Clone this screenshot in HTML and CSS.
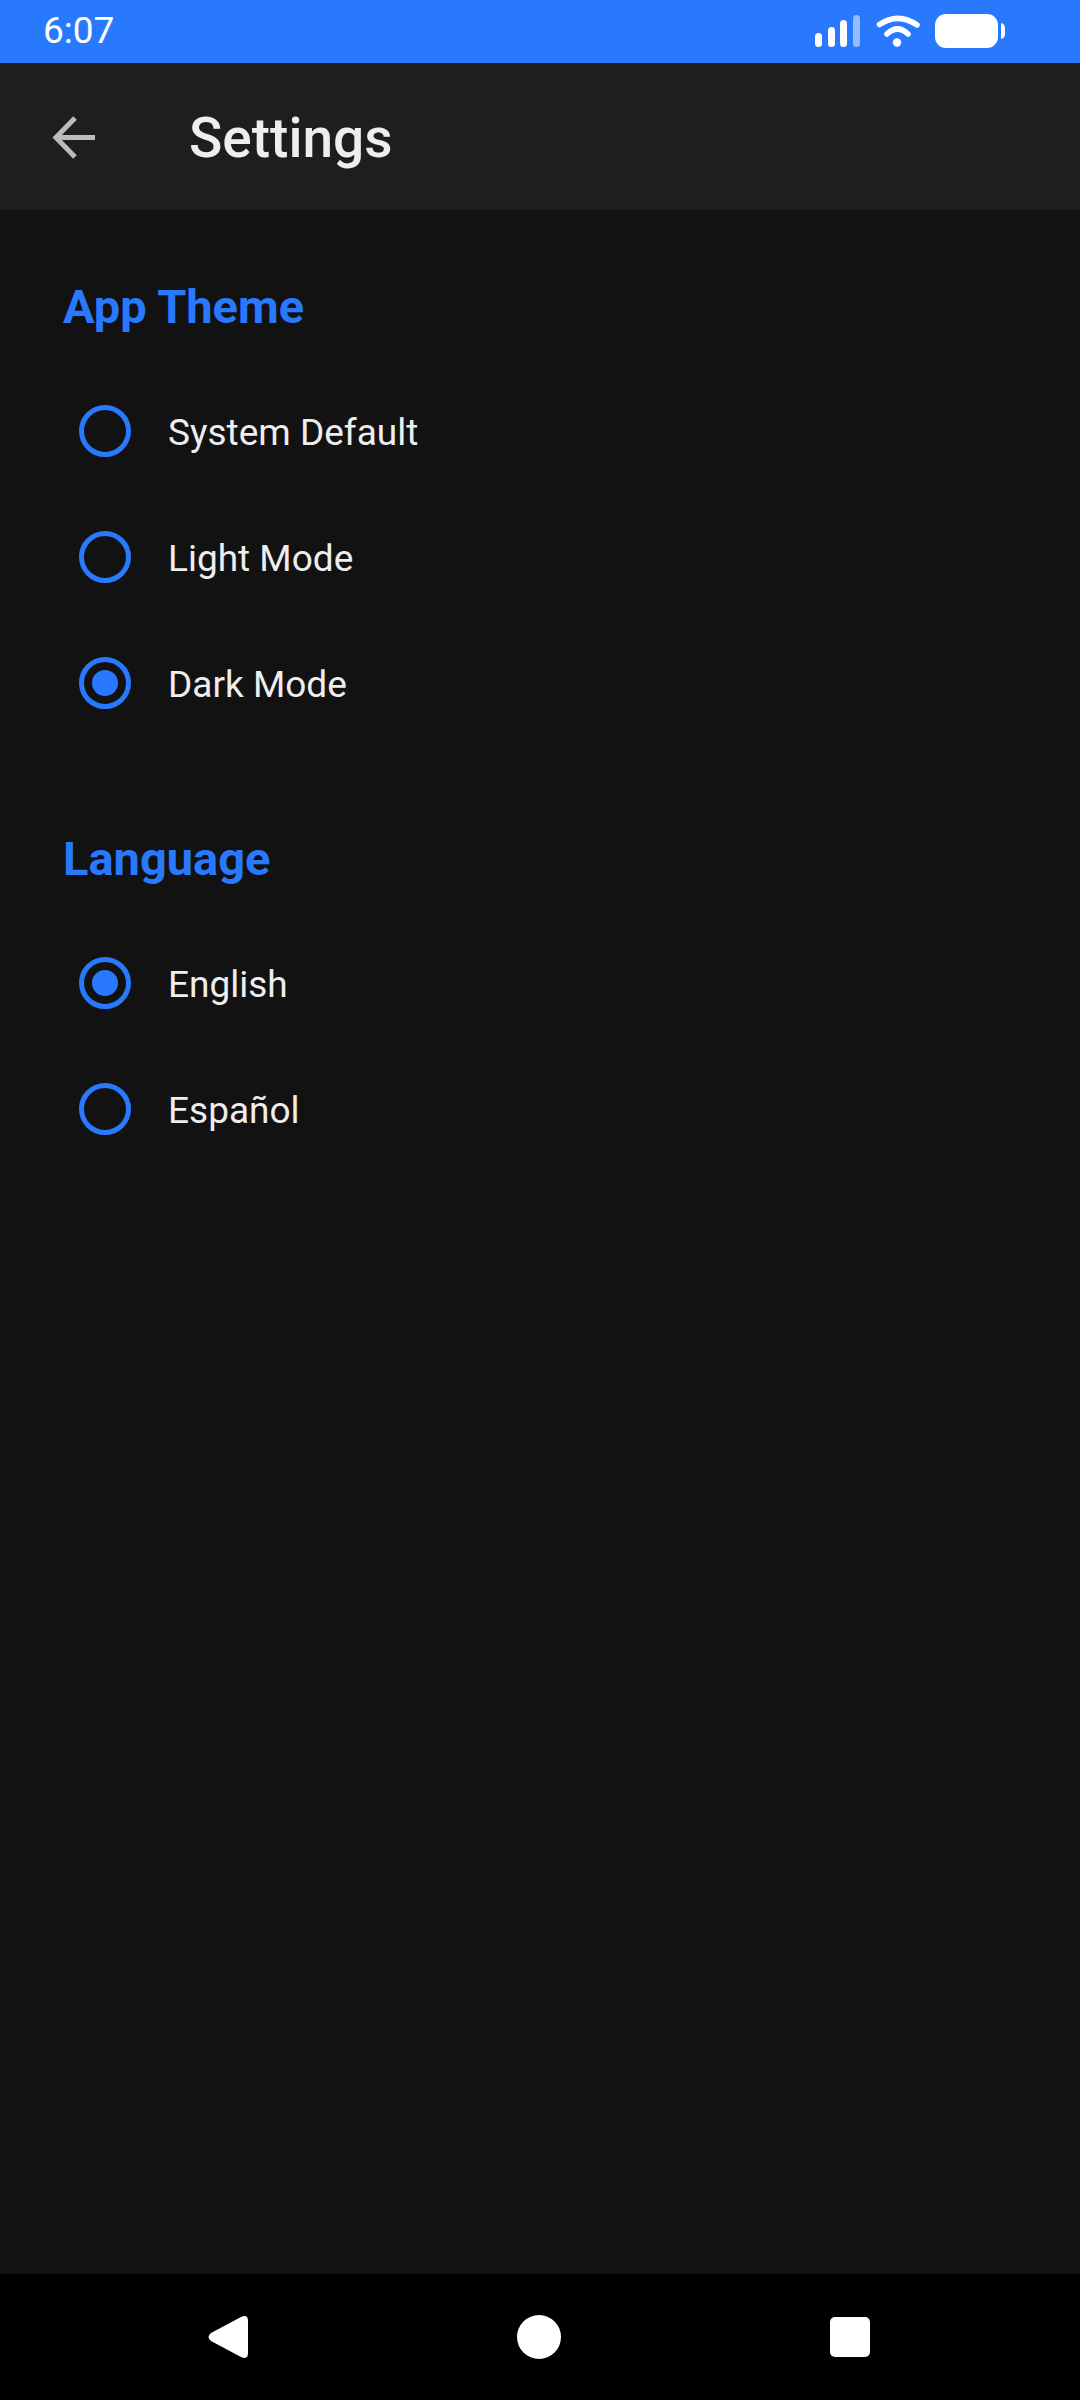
FILE: index.html
```html
<!DOCTYPE html>
<html lang="en">
<head>
    <meta charset="UTF-8">
    <meta name="viewport" content="width=device-width, initial-scale=1.0">
    <title>Settings</title>
    <link rel="stylesheet" href="styles.css">
</head>
<body>
    <div class="status-bar">
        <span class="status-time">6:07</span>
        <svg class="status-icons" width="200" height="63" viewBox="810 0 200 63">
            <rect x="815" y="33" width="7" height="14" rx="3.5" fill="#fff"/>
            <rect x="828" y="27" width="7" height="20" rx="3.5" fill="#fff"/>
            <rect x="840" y="20" width="7" height="27" rx="3.5" fill="#fff"/>
            <rect x="853" y="15" width="7" height="32" rx="3.5" fill="#fff" fill-opacity="0.5"/>
            <path d="M879.5 24.500 Q898 12 917 25" fill="none" stroke="#fff" stroke-width="5.500" stroke-linecap="round"/>
            <path d="M887 34 Q897.500 24 908 34" fill="none" stroke="#fff" stroke-width="5.500" stroke-linecap="round"/>
            <circle cx="897" cy="42.500" r="4.200" fill="#fff"/>
            <rect x="935" y="14" width="63" height="34" rx="11" fill="#fff"/>
            <path d="M1001 23 Q1005 24 1005 28 V34 Q1005 38 1001 39 Z" fill="#fff"/>
        </svg>
    </div>

    <header class="toolbar">
        <svg class="back-icon" width="46" height="46" viewBox="0 0 46 46">
            <path d="M45 23.500 H6 M25 4 L6 23.500 L25 43" fill="none" stroke="#bbb" stroke-width="5"/>
        </svg>
        <h1 class="toolbar-title">Settings</h1>
    </header>

    <main class="content">
        <section class="group">
            <h2 class="group-title">App Theme</h2>
            <div class="option"><span class="radio"></span><span class="option-label">System Default</span></div>
            <div class="option"><span class="radio"></span><span class="option-label">Light Mode</span></div>
            <div class="option"><span class="radio checked"></span><span class="option-label">Dark Mode</span></div>
        </section>
        <section class="group">
            <h2 class="group-title">Language</h2>
            <div class="option"><span class="radio checked"></span><span class="option-label">English</span></div>
            <div class="option"><span class="radio"></span><span class="option-label">Español</span></div>
        </section>
    </main>

    <nav class="nav-bar">
        <svg width="40" height="44" viewBox="0 0 40 44">
            <path d="M33 2 L3 18 Q-2 22 3 26 L33 42 Q40 45 40 38 V6 Q40 -1 33 2 Z" fill="#fff"/>
        </svg>
        <svg width="44" height="44" viewBox="0 0 44 44">
            <circle cx="22" cy="22" r="22" fill="#fff"/>
        </svg>
        <svg width="40" height="40" viewBox="0 0 40 40">
            <rect width="40" height="40" rx="5" fill="#fff"/>
        </svg>
    </nav>
</body>
</html>
```

FILE: styles.css
```css
* {
    box-sizing: border-box;
}
body {
    font-family: Roboto, "Liberation Sans", sans-serif;
    background-color: #121212;
    margin: 0;
    padding: 0;
    width: 1080px;
    height: 2400px;
    display: flex;
    flex-direction: column;
    overflow: hidden;
}
.status-bar {
    height: 63px;
    background-color: #2979ff;
    color: #fff;
    display: flex;
    align-items: center;
    justify-content: space-between;
    padding: 0 70px 0 43px;
}
.status-time {
    font-size: 37px;
    padding-bottom: 2px;
}
.status-icons {
    display: block;
}
.toolbar {
    height: 147px;
    background-color: #1e1e1e;
    display: flex;
    align-items: center;
    padding-left: 50px;
}
.back-icon {
    display: block;
    margin-right: 93px;
}
.toolbar-title {
    margin: 0;
    padding-top: 2px;
    font-size: 55px;
    font-weight: 500;
    color: #eee;
}
.content {
    flex: 1;
    padding: 66px 0 0 63px;
}
.group {
    margin-bottom: 82px;
}
.group-title {
    margin: 0 0 32px;
    height: 60px;
    line-height: 62px;
    font-size: 47px;
    font-weight: 700;
    color: #2979ff;
}
.option {
    height: 126px;
    display: flex;
    align-items: center;
    gap: 37px;
    padding-left: 16px;
    font-size: 37px;
    color: #eee;
}
.option-label {
    padding-top: 3px;
}
.radio {
    width: 52px;
    height: 52px;
    border: 5px solid #2979ff;
    border-radius: 50%;
    display: flex;
    align-items: center;
    justify-content: center;
}
.radio.checked::after {
    content: "";
    width: 26px;
    height: 26px;
    border-radius: 50%;
    background-color: #2979ff;
}
.nav-bar {
    height: 126px;
    background-color: #000;
    display: flex;
    align-items: center;
    gap: 269px;
    padding-left: 208px;
}
```
